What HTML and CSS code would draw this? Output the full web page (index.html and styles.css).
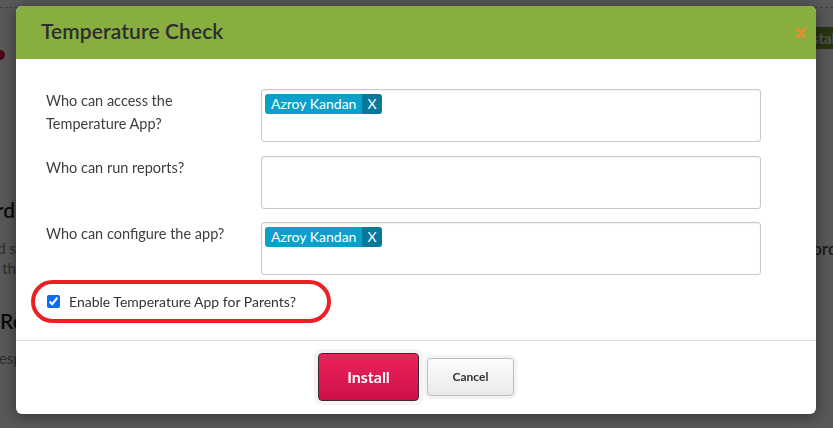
FILE: index.html
```html
<!DOCTYPE html>
<html>
<head>
<meta charset="utf-8">
<link rel="stylesheet" href="styles.css">
</head>
<body>
<div class="page">
  <div class="page-top"></div>
  <div class="page-cols">
    <div class="bg-left">
      <div class="bg-dot"></div>
      <h2 class="bg-line bg-head">Dashboard</h2>
      <p class="bg-line bg-text bg-text1">Add and s</p>
      <p class="bg-line bg-text">Use the th</p>
      <h2 class="bg-head bg-head2">Reports</h2>
      <p class="bg-text bg-text2">Responses</p>
    </div>
    <div class="bg-right">
      <span class="bg-btn">Install</span>
      <p class="bg-word">Record</p>
    </div>
  </div>
</div>
<div class="backdrop"></div>
<div class="modal">
  <div class="modal-header">
    <h1 class="modal-title">Temperature Check</h1>
    <span class="close" aria-label="Close">
      <svg width="10" height="10" viewBox="0 0 10 10"><path d="M1.5 1.5 L8.5 8.5 M8.5 1.5 L1.5 8.5" stroke="#f28a2e" stroke-width="2.6" stroke-linecap="round"/></svg>
    </span>
  </div>
  <div class="modal-body">
    <div class="form-row">
      <label class="form-label">Who can access the Temperature App?</label>
      <div class="picker">
        <span class="tag"><span class="tag-name">Azroy Kandan</span><span class="tag-x">X</span></span>
      </div>
    </div>
    <div class="form-row">
      <label class="form-label">Who can run reports?</label>
      <div class="picker"></div>
    </div>
    <div class="form-row">
      <label class="form-label">Who can configure the app?</label>
      <div class="picker">
        <span class="tag"><span class="tag-name">Azroy Kandan</span><span class="tag-x">X</span></span>
      </div>
    </div>
    <label class="parents-row">
      <input type="checkbox" class="check" checked>
      <span>Enable Temperature App for Parents?</span>
    </label>
  </div>
  <div class="modal-footer">
    <button class="btn btn-install">Install</button>
    <button class="btn btn-cancel">Cancel</button>
  </div>
</div>
</body>
</html>
```
FILE: styles.css
```css
* { box-sizing: border-box; }
html, body { margin: 0; height: 100%; }
body {
  font-family: "Lato", "Liberation Sans", sans-serif;
  background: #fff;
  overflow: hidden;
  width: 833px;
  height: 428px;
}
.page { height: 428px; }
.page-top { height: 8px; border-bottom: 1px dashed #bbb; }
.page-cols { display: flex; justify-content: space-between; }
.bg-left { width: 16px; display: flex; flex-direction: column; }
.bg-line { display: flex; justify-content: flex-end; white-space: nowrap; }
.bg-dot { width: 10px; height: 10px; border-radius: 50%; background: #e0103a; margin: 42px 0 0 -5px; }
.bg-head { font-size: 21px; font-weight: 600; color: #222; margin: 137px 0 0; line-height: 26px; white-space: nowrap; }
.bg-head:first-of-type { width: 15px; }
.bg-head2 { margin-top: 30px; }
.bg-text { font-size: 15px; color: #888; margin: 0; line-height: 20px; white-space: nowrap; }
.bg-text1 { margin-top: 15px; }
.bg-text2 { margin: 14px 0 0 -10px; }
.bg-right { width: 20px; overflow: hidden; display: flex; flex-direction: column; }
.bg-btn {
  display: inline-block; margin-top: 19px; margin-left: -20px;
  background: #6f9a2f; color: #eee; font-weight: 700; font-size: 15px;
  padding: 2px 6px; width: 60px; white-space: nowrap;
}
.bg-word { margin: 188px 0 0 -30px; font-size: 18px; color: #444; white-space: nowrap; }

.backdrop { position: fixed; inset: 0; background: rgba(0,0,0,0.655); }

.modal {
  position: absolute; left: 16px; top: 6px; width: 800px; height: 408px;
  background: #fff; border-radius: 6px; overflow: hidden;
  box-shadow: 0 2px 14px rgba(0,0,0,0.45);
}
.modal-header {
  height: 53px; background: #87ae3f;
  display: flex; align-items: center; justify-content: space-between;
  padding: 0 10px 4px 25px;
}
.modal-title { margin: 0; font-size: 21px; font-weight: 600; color: #2d2d2d; letter-spacing: 0.1px; }
.close { display: flex; margin-top: 5px; }

.modal-body { padding: 30px 55px 17px 30px; border-bottom: 1px solid #dcdcdc; }
.form-row { display: grid; grid-template-columns: 215px 500px; margin-bottom: 13.5px; }
.form-label { font-size: 14.5px; line-height: 23px; color: #3e3e3e; padding-right: 20px; padding-top: 0; }
.picker {
  height: 53px; border: 1px solid #c9c9c9; border-radius: 3px; padding: 3px;
  box-shadow: inset 0 1px 2px rgba(0,0,0,0.06);
}
.tag { display: inline-flex; height: 20px; border-radius: 3px; overflow: hidden; font-size: 14px; color: #fff; line-height: 20px; }
.tag-name { background: #0aa0c9; padding: 0 6px; }
.tag-x { background: #08799a; padding: 0 5px; }

.parents-row {
  display: flex; align-items: center; width: 300px; height: 43px;
  margin: -9px 0 0 -15px; border: 4px solid #ec2023; border-radius: 24px;
  padding-left: 12px; font-size: 14px; color: #333;
}
.check { margin: 0 9px 0 0; width: 13px; height: 13px; accent-color: #0a6cf5; }

.modal-footer { height: 74px; display: flex; align-items: center; justify-content: center; gap: 8px; padding-bottom: 2px; }
.btn { font-family: inherit; cursor: pointer; border-radius: 4px; }
.btn-install {
  width: 101px; height: 48px; color: #fff; font-weight: 700; font-size: 16px;
  background: linear-gradient(#ec2257, #cf0f4a); border: 1px solid #3c2a30;
  box-shadow: 0 0 0 4px #f3f3f3;
}
.btn-cancel {
  width: 87px; height: 38px; color: #333; font-weight: 700; font-size: 12px;
  background: linear-gradient(#fdfdfd, #e9e9e9); border: 1px solid #bdbdbd;
  box-shadow: 0 0 0 3px #f3f3f3;
}
```
